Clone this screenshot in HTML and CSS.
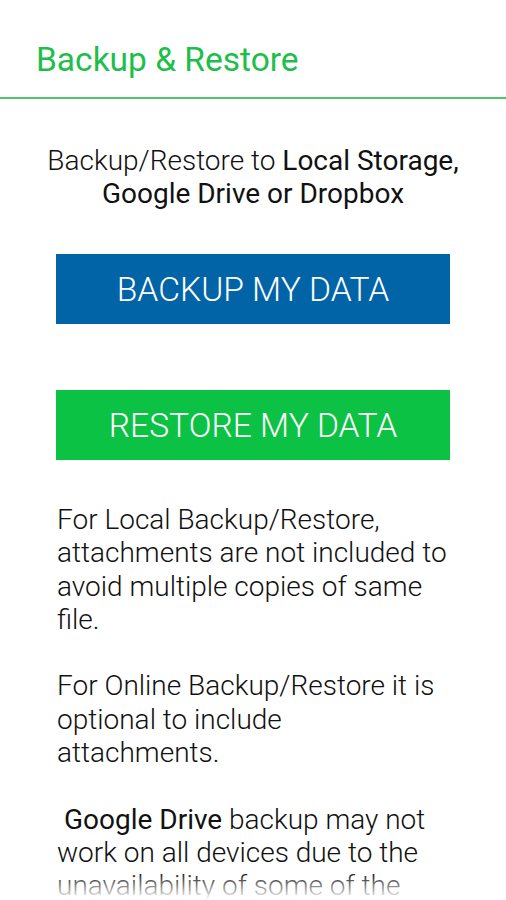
FILE: index.html
```html
<!DOCTYPE html>
<html lang="en">
<head>
    <meta charset="UTF-8">
    <meta name="viewport" content="width=device-width, initial-scale=1.0">
    <title>Backup &amp; Restore</title>
    <link rel="stylesheet" href="styles.css">
</head>
<body>
    <div class="header">
        <h1>Backup &amp; Restore</h1>
    </div>

    <p class="intro">Backup/Restore to <b>Local Storage, Google Drive or Dropbox</b></p>

    <div class="actions">
        <button class="btn btn-backup">BACKUP MY DATA</button>
        <button class="btn btn-restore">RESTORE MY DATA</button>
    </div>

    <p class="notes">
        For Local Backup/Restore, attachments are not included to avoid multiple copies of same file.<br><br>
        For Online Backup/Restore it is optional to include attachments.<br><br>
        <b>&nbsp;Google Drive</b> backup may not work on all devices due to the unavailability of some of the required services on the device.
    </p>

    <div class="fade"></div>
</body>
</html>
```

FILE: styles.css
```css
body {
    font-family: Roboto, "Noto Sans", sans-serif;
    background-color: #fff;
    color: #111;
    margin: 0;
    overflow: hidden;
}
.header {
    padding: 40px 0 17px 36px;
    border-bottom: 2px solid #4dc767;
}
h1 {
    margin: 0;
    font-size: 33.5px;
    line-height: 40px;
    font-weight: 400;
    color: #1ebe4b;
}
.intro {
    margin: 45px 10px 0;
    font-size: 28px;
    line-height: 33px;
    font-weight: 300;
    text-align: center;
}
b {
    font-weight: 400;
}
.actions {
    display: flex;
    flex-direction: column;
    gap: 66px;
    margin: 44px 56px 0;
}
.btn {
    height: 70px;
    border: none;
    color: white;
    font-family: inherit;
    font-size: 33.6px;
    font-weight: 300;
    padding: 0;
    cursor: pointer;
}
.btn-backup {
    background: #0064a7;
}
.btn-restore {
    background: #0cc244;
}
.notes {
    width: 391px;
    margin: 43px 0 0 57px;
    font-size: 28px;
    line-height: 33.3px;
    font-weight: 300;
}
.fade {
    position: fixed;
    left: 0;
    right: 0;
    bottom: 0;
    height: 28px;
    background: linear-gradient(rgba(255, 255, 255, 0), #fff);
}
```
